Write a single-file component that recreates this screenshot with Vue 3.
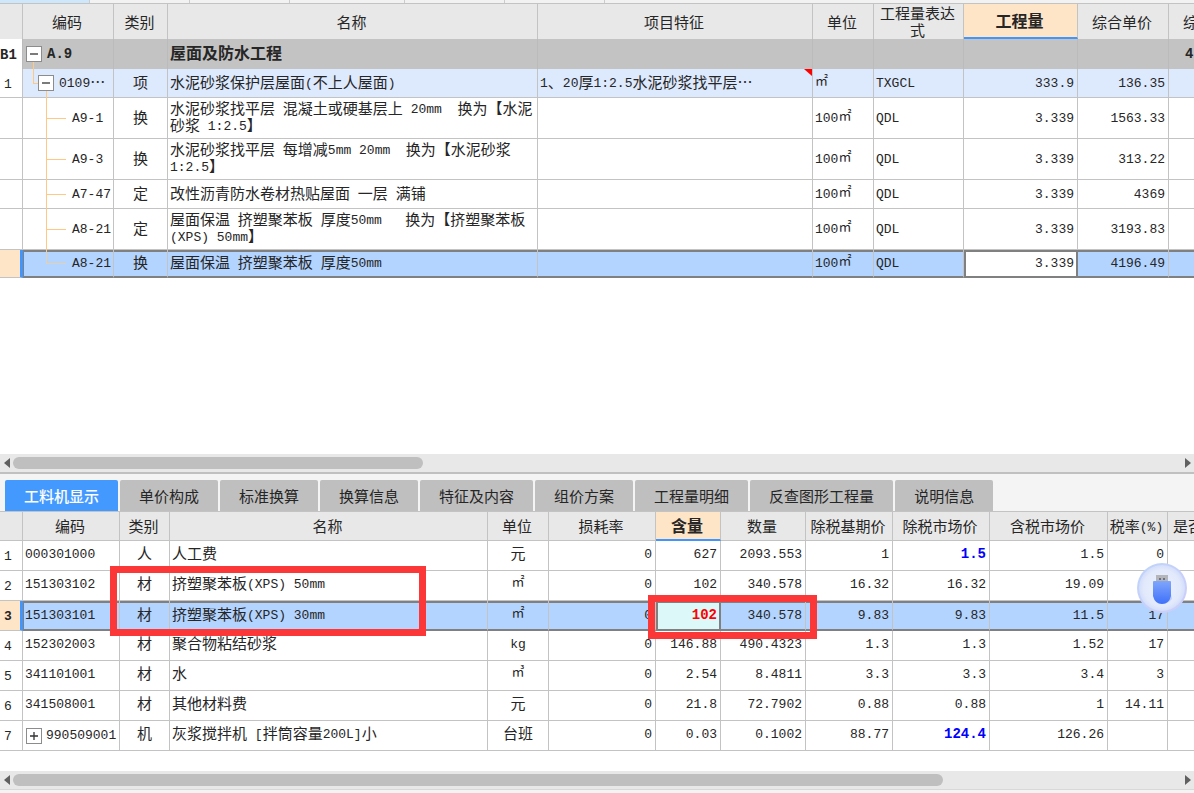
<script setup>
import { h } from 'vue'

// Splits a string into ASCII runs (half-width face), unit signs and CJK text.
const Txt = (props) =>
  (String(props.v).match(/[\x20-\x7e]+|[㎡㎥]|[^\x20-\x7e㎡㎥]+/g) || []).map((s) => {
    if (/^[\x20-\x7e]/.test(s)) return h('span', { class: 'lat' }, s)
    if (/^[㎡㎥]/.test(s)) return h('span', { class: 'unit' }, s)
    return s
  })
Txt.props = ['v']

const topCols = [
  { w: 23 }, { w: 91, t: '编码' }, { w: 54, t: '类别' }, { t: '名称' }, { w: 275, t: '项目特征' },
  { w: 61, t: '单位' }, { w: 90, t: '工程量表达式' }, { w: 114, t: '工程量', on: true }, { w: 91, t: '综合单价' }, { w: 25, t: '综', cut: true }
]
const topRows = [
  { k: 'group', no: 'B1', code: 'A.9', tree: 'root', type: '', name: '屋面及防水工程', more: '4' },
  { k: 'item', no: '1', code: '0109…', tree: 'branch', type: '项', name: '水泥砂浆保护层屋面(不上人屋面)', feat: '1、20厚1:2.5水泥砂浆找平层…', unit: '㎡', expr: 'TXGCL', qty: '333.9', price: '136.35' },
  { k: 'tall', code: 'A9-1', tree: 'leaf', type: '换', name: '水泥砂浆找平层 混凝土或硬基层上 20mm  换为【水泥\n砂浆 1:2.5】', unit: '100㎡', expr: 'QDL', qty: '3.339', price: '1563.33' },
  { k: 'tall', code: 'A9-3', tree: 'leaf', type: '换', name: '水泥砂浆找平层 每增减5mm 20mm  换为【水泥砂浆\n1:2.5】', unit: '100㎡', expr: 'QDL', qty: '3.339', price: '313.22' },
  { k: 'short', code: 'A7-47', tree: 'leaf', type: '定', name: '改性沥青防水卷材热贴屋面 一层 满铺', unit: '100㎡', expr: 'QDL', qty: '3.339', price: '4369' },
  { k: 'tall', code: 'A8-21', tree: 'leaf', type: '定', name: '屋面保温 挤塑聚苯板 厚度50mm   换为【挤塑聚苯板\n(XPS) 50mm】', unit: '100㎡', expr: 'QDL', qty: '3.339', price: '3193.83' },
  { k: 'sel', code: 'A8-21', tree: 'leaf last', type: '换', name: '屋面保温 挤塑聚苯板 厚度50mm', unit: '100㎡', expr: 'QDL', qty: '3.339', price: '4196.49' }
]

const tabs = ['工料机显示', '单价构成', '标准换算', '换算信息', '特征及内容', '组价方案', '工程量明细', '反查图形工程量', '说明信息']

const lowCols = [
  { w: 23 }, { w: 97, t: '编码' }, { w: 50, t: '类别' }, { t: '名称' }, { w: 61, t: '单位' }, { w: 107, t: '损耗率' },
  { w: 65, t: '含量', on: true }, { w: 85, t: '数量' }, { w: 87, t: '除税基期价' }, { w: 97, t: '除税市场价' },
  { w: 118, t: '含税市场价' }, { w: 60, t: '税率(%)' }, { w: 26, t: '是否', near: true }
]
const lowRows = [
  { code: '000301000', type: '人', name: '人工费', unit: '元', n: ['0', '627', '2093.553', '1', '1.5', '1.5', '0'], blue: true },
  { code: '151303102', type: '材', name: '挤塑聚苯板(XPS) 50mm', unit: '㎡', n: ['0', '102', '340.578', '16.32', '16.32', '19.09', ''] },
  { code: '151303101', type: '材', name: '挤塑聚苯板(XPS) 30mm', unit: '㎡', n: ['0', '102', '340.578', '9.83', '9.83', '11.5', '17'], sel: true },
  { code: '152302003', type: '材', name: '聚合物粘结砂浆', unit: 'kg', n: ['0', '146.88', '490.4323', '1.3', '1.3', '1.52', '17'] },
  { code: '341101001', type: '材', name: '水', unit: '㎥', n: ['0', '2.54', '8.4811', '3.3', '3.3', '3.4', '3'] },
  { code: '341508001', type: '材', name: '其他材料费', unit: '元', n: ['0', '21.8', '72.7902', '0.88', '0.88', '1', '14.11'] },
  { code: '990509001', type: '机', name: '灰浆搅拌机 [拌筒容量200L]小', unit: '台班', n: ['0', '0.03', '0.1002', '88.77', '124.4', '126.26', ''], blue: true, plus: true }
]
const bars = { top: 35.1, low: 79.6 }
const colStyle = (c) => (c.w ? { width: c.w + 'px' } : {})
</script>

<template>
  <main class="app">
    <div class="strip"><i class="lit"></i><i></i><i></i><i class="wide"></i><i></i><i></i></div>
    <section class="upper">
      <table class="grid top">
        <colgroup><col v-for="(c, i) in topCols" :key="i" :style="colStyle(c)" /></colgroup>
        <thead>
          <tr>
            <th v-for="(c, i) in topCols" :key="i" :class="{ on: c.on, cut: c.cut }">{{ c.t }}</th>
          </tr>
        </thead>
        <tbody>
          <tr v-for="(r, i) in topRows" :key="i" :class="r.k">
            <td class="no"><Txt :v="r.no || ''" /></td>
            <td class="code" :class="r.tree">
              <button v-if="r.tree === 'root' || r.tree === 'branch'" class="tog" type="button" aria-label="−">
                <svg viewBox="0 0 14 14"><path d="M3 7h8" /></svg>
              </button>
              <Txt :v="r.code" />
            </td>
            <td class="mid">{{ r.type }}</td>
            <td class="name"><Txt :v="r.name" /></td>
            <td :class="{ note: r.k === 'item' }"><Txt :v="r.feat || ''" /></td>
            <td><Txt :v="r.unit || ''" /></td>
            <td><Txt :v="r.expr || ''" /></td>
            <td class="num qty"><Txt :v="r.qty || ''" /></td>
            <td class="num"><Txt :v="r.price || ''" /></td>
            <td class="more"><Txt :v="r.more || ''" /></td>
          </tr>
        </tbody>
      </table>
    </section>

    <div class="scroll">
      <button type="button" aria-label="◀"><svg viewBox="0 0 8 12"><path d="M7 1v10L1 6z" /></svg></button>
      <div class="track"><div class="thumb" :style="{ width: bars.top + '%' }"></div></div>
      <button type="button" aria-label="▶"><svg viewBox="0 0 8 12"><path d="M1 1v10l6-5z" /></svg></button>
    </div>

    <nav class="tabs">
      <button v-for="(t, i) in tabs" :key="t" type="button" :class="{ active: i === 0 }">{{ t }}</button>
    </nav>

    <section class="lower">
      <table class="grid low">
        <colgroup><col v-for="(c, i) in lowCols" :key="i" :style="colStyle(c)" /></colgroup>
        <thead>
          <tr>
            <th v-for="(c, i) in lowCols" :key="i" :class="{ on: c.on, near: c.near }"><Txt :v="c.t || ''" /></th>
          </tr>
        </thead>
        <tbody>
          <tr v-for="(r, i) in lowRows" :key="i" :class="{ sel: r.sel }">
            <td class="no"><Txt :v="i + 1" /></td>
            <td class="code" :class="{ plus: r.plus }">
              <button v-if="r.plus" class="tog" type="button" aria-label="+">
                <svg viewBox="0 0 14 14"><path d="M3 7h8M7 3v8" /></svg>
              </button>
              <Txt :v="r.code" />
            </td>
            <td class="mid">{{ r.type }}</td>
            <td class="name"><Txt :v="r.name" /></td>
            <td class="mid"><Txt :v="r.unit" /></td>
            <td
              v-for="(n, j) in r.n"
              :key="j"
              class="num"
              :class="{ blue: r.blue && j === 4, hot: r.sel && j === 1 }"
            ><Txt :v="n" /></td>
            <td></td>
          </tr>
        </tbody>
      </table>
      <div class="mark mark-name"></div>
      <div class="mark mark-qty"></div>
      <button class="usb" type="button" aria-label="USB">
        <svg viewBox="0 0 50 50">
          <defs>
            <linearGradient id="usbBody" x1="0" y1="0" x2="0" y2="1">
              <stop offset="0" stop-color="#7fa6fb" /><stop offset="1" stop-color="#3f70fa" />
            </linearGradient>
            <linearGradient id="usbRing" x1="0" y1="0" x2="1" y2="1">
              <stop offset="0" stop-color="#bdd4fb" /><stop offset="1" stop-color="#cfcdfa" />
            </linearGradient>
            <radialGradient id="usbFace">
              <stop offset="0" stop-color="#edf2fc" /><stop offset="0.8" stop-color="#e2e9fb" /><stop offset="1" stop-color="#d3defa" />
            </radialGradient>
          </defs>
          <circle cx="25" cy="25" r="25" fill="url(#usbRing)" />
          <circle cx="25" cy="25" r="23" fill="url(#usbFace)" />
          <path d="M20 39q8 5 15-3l-1-5z" fill="#c3cffa" />
          <path d="M19 12h12v8H19z" fill="#b4b6bc" />
          <path d="M22 15h2v2h-2zM26 15h2v2h-2z" fill="#6e7179" />
          <path d="M16 19q0-1 1-1h16q1 0 1 1v14q-2 8-9 8t-9-8z" fill="url(#usbBody)" />
        </svg>
      </button>
    </section>

    <div class="scroll">
      <button type="button" aria-label="◀"><svg viewBox="0 0 8 12"><path d="M7 1v10L1 6z" /></svg></button>
      <div class="track"><div class="thumb" :style="{ width: bars.low + '%' }"></div></div>
      <button type="button" aria-label="▶"><svg viewBox="0 0 8 12"><path d="M1 1v10l6-5z" /></svg></button>
    </div>
    <div class="foot"></div>
  </main>
</template>

<style>
html, body { background: #fff; }
</style>

<style scoped>
.app {
  min-height: 100vh;
  display: flex;
  flex-direction: column;
  overflow: hidden;
  background: #fff;
  color: #262626;
  font: 15px/17px "Noto Sans CJK SC", sans-serif;
}
* { box-sizing: border-box; }
button { font: inherit; color: inherit; border: 0; padding: 0; margin: 0; background: none; }
.app :deep(.lat) { font-family: "Liberation Mono", monospace; font-size: 13px; line-height: 13px; vertical-align: 1px; }
.app :deep(.unit) { font-size: 13px; line-height: 10px; vertical-align: 3px; }
.strip { display: flex; height: 3px; background: #f2f2f2; }
.strip i { width: 100px; border-right: 1px solid #ccc; }
.strip .wide { width: 115px; }
.strip .lit { width: 90px; background: #cfe7fb; }
.upper { flex: 1; }

.grid { width: 100%; table-layout: fixed; border-collapse: separate; border-spacing: 0; }
.grid th, .grid td {
  border: 0 solid #c3c3c3;
  border-width: 0 1px 1px 0;
  padding: 0 2px 4px;
  white-space: pre;
  text-align: left;
  vertical-align: middle;
}
.grid th {
  background: #e8e8e8;
  border-top-width: 1px;
  font-weight: 400;
  text-align: center;
  padding: 0 2px 1px 0;
  white-space: normal;
}
.grid th.on { background: #ffe5c7; font-size: 16px; font-weight: 700; border-bottom: 2px solid #4096ff; }
.grid th:last-child, .grid td:last-child { border-right-width: 0; }
.grid th.cut { text-align: left; padding-left: 14px; white-space: nowrap; }
.grid th.near { text-align: left; padding-left: 5px; white-space: nowrap; }
.grid .mid { text-align: center; }
.grid .num { text-align: right; padding-right: 3px; }
.grid .no { text-align: left; padding: 0 0 2px 4px; background: #fff; }

.top th { height: 36px; border-bottom-width: 0; }
.top .group td { height: 30px; background: #c3c3c3; border-color: #bbb; border-bottom-width: 0; font-size: 16px; font-weight: 700; }
.top .group :deep(.lat), .grid .blue :deep(.lat), .grid .hot :deep(.lat) { font-size: 14px; }
.top .group .no { background: #fff; padding: 0 0 2px; }
.top .item td { height: 29px; background: #dde9fd; }
.top .item .no { background: #fff; }
.top .tall td { height: 41px; }
.top .short td { height: 29px; }
.top .sel td { height: 28px; }
.top .more { padding-left: 16px; }

.low td { padding-bottom: 6px; }
.grid .sel td {
  background: #b3d4ff;
  border-bottom: 2px solid #808080;
  box-shadow: inset 0 2px #808080;
  padding-bottom: 3px;
}
.grid .sel .no {
  background: #ffe5c7;
  box-shadow: none;
  font-weight: 700;
  border-right: 3px solid #4096ff;
  border-bottom: 1px solid #c3c3c3;
}
.grid .sel .code { box-shadow: inset 1px 2px #808080; }
.grid .sel .qty { background: #fff; box-shadow: inset 2px 2px #808080, inset -1px 0 #808080; border-right-color: #808080; }
.grid .sel .hot {
  background: #ddf8f8;
  color: #f00;
  font-weight: 700;
  box-shadow: inset 2px 2px #808080, inset -1px 0 #808080;
  border-right-color: #808080;
}
.grid .blue { color: #00f; font-weight: 700; }

.tog {
  position: relative;
  z-index: 1;
  width: 16px;
  height: 16px;
  display: inline-block;
  vertical-align: middle;
  border: 1px solid #8c8c8c;
  background: #fff;
}
.tog svg { display: block; width: 14px; height: 14px; }
.tog path { stroke: #333; stroke-width: 1.3; fill: none; }
.grid .code { white-space: nowrap; }
.top .code { position: relative; }
.top .code.root, .low .code.plus { padding: 0 0 2px 3px; }
.code .tog { margin-right: 5px; }
.low .code .tog { margin-right: 4px; }
.top .code.branch { padding: 0 0 2px 15px; }
.top .code.leaf { padding-left: 49px; }
.code.root::after { content: ""; position: absolute; left: 10px; top: 22px; bottom: 0; border-left: 1px solid #ffc983; }
.code.branch::before { content: ""; position: absolute; left: 10px; top: 0; width: 5px; height: 50%; border: 1px solid #ffc983; border-width: 0 0 1px 1px; }
.code.branch::after { content: ""; position: absolute; left: 23px; top: 21px; bottom: -1px; border-left: 1px solid #ffc983; }
.code.leaf::before { content: ""; position: absolute; left: 23px; top: 0; bottom: -1px; border-left: 1px solid #ffc983; }
.code.leaf::after { content: ""; position: absolute; left: 23px; top: 50%; width: 20px; border-top: 1px solid #ffc983; }
.code.last::before { bottom: 50%; border-color: #e6cfab; }
.code.last::after { border-color: #e6cfab; }
.top .note { position: relative; }
.note::after { content: ""; position: absolute; right: 0; top: 0; border: solid transparent; border-width: 0 8px 7px 0; border-right-color: #f00; }

.scroll {
  display: flex;
  align-items: center;
  height: 18px;
  background: #e8e8e8;
}
.scroll button { width: 13px; height: 18px; display: flex; align-items: center; justify-content: center; }
.scroll svg { width: 8px; height: 12px; fill: #606060; }
.track { flex: 1; }
.thumb { height: 12px; border-radius: 6px; background: #bfbfbf; }

.tabs {
  display: flex;
  gap: 2px;
  padding: 6px 5px 0;
  border-top: 2px solid #c0c0c0;
  background: #f4f4f4;
}
.tabs button { height: 31px; padding: 0 19px; border-radius: 2px 2px 0 0; background: #bfbfbf; white-space: nowrap; }
.tabs .active { background: #4499ff; color: #fff; font-weight: 500; }

.lower { position: relative; padding-bottom: 20px; }
.low th { height: 30px; }
.low td { height: 30px; }
.mark { position: absolute; border: 7px solid #fc3737; pointer-events: none; }
.mark-name { left: 110px; top: 55px; width: 316px; height: 70px; }
.mark-qty { right: 377px; top: 84px; width: 169px; height: 44px; }
.usb { position: absolute; right: 7px; top: 52px; width: 50px; height: 50px; }
.usb svg { display: block; width: 50px; height: 50px; }
.foot { height: 4px; border-top: 1px solid #d8d8d8; background: #f4f4f4; }
</style>
